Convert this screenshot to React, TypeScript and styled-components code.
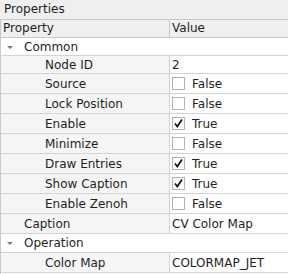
import React from 'react';
import styled, { createGlobalStyle } from 'styled-components';

const GlobalStyle = createGlobalStyle`
  body {
    margin: 0;
    font-family: 'DejaVu Sans', 'Noto Sans', sans-serif;
    font-size: 12px;
    color: #1e1e1e;
  }
`;

const Panel = styled.div`
  width: 288px;
  height: 274px;
  background: #efefef;
  overflow: hidden;
  display: flex;
  flex-direction: column;
`;

const TitleBar = styled.div`
  height: 19px;
  line-height: 18px;
  padding-left: 4px;
  flex: none;
`;

const Tree = styled.div`
  flex: 1;
  display: flex;
  flex-direction: column;
  border-left: 1px solid #c9c9c9;
  background: #ffffff;
`;

const HeaderRow = styled.div`
  display: flex;
  height: 19px;
  box-sizing: border-box;
  border-top: 1px solid #c9c9c9;
  border-bottom: 1px solid #c9c9c9;
  background: #efefef;
  line-height: 17px;
`;

const HeaderCell = styled.div<{ $first?: boolean }>`
  width: ${({ $first }) => ($first ? '169px' : 'auto')};
  flex: ${({ $first }) => ($first ? 'none' : '1')};
  padding-left: 2px;
  box-sizing: border-box;
  border-right: ${({ $first }) => ($first ? '1px solid #c9c9c9' : 'none')};
`;

const Row = styled.div<{ $h: number; $group?: boolean }>`
  display: flex;
  height: ${({ $h }) => $h}px;
  box-sizing: border-box;
  border-bottom: 1px solid #d4d4d4;
  background: ${({ $group }) => ($group ? '#ffffff' : '#f5f5f5')};
  align-items: stretch;
`;

const NameCell = styled.div<{ $level: number; $group?: boolean }>`
  width: ${({ $group }) => ($group ? 'auto' : '169px')};
  flex: ${({ $group }) => ($group ? '1' : 'none')};
  box-sizing: border-box;
  border-right: ${({ $group }) => ($group ? 'none' : '1px solid #d4d4d4')};
  display: flex;
  align-items: center;
  padding-left: ${({ $level }) => ($level === 0 ? 5 : 44)}px;
  white-space: nowrap;
`;

const Expander = styled.span`
  width: 0;
  height: 0;
  border-left: 3px solid transparent;
  border-right: 3px solid transparent;
  border-top: 3px solid #7a7a7a;
  margin-left: 1px;
  margin-right: 11px;
  margin-top: 1px;
`;

const Spacer = styled.span`
  width: 18px;
  flex: none;
`;

const ValueCell = styled.div`
  flex: 1;
  background: #ffffff;
  display: flex;
  align-items: center;
  padding-left: 2px;
  gap: 7px;
  white-space: nowrap;
`;

const Box = styled.span`
  width: 13px;
  height: 13px;
  box-sizing: border-box;
  border: 1px solid #b3b3b3;
  background: #ffffff;
  display: flex;
  align-items: center;
  justify-content: center;
  flex: none;
`;

type Prop = {
  name: string;
  level: number;
  h: number;
  group?: boolean;
  value?: string;
  check?: boolean;
};

const rows: Prop[] = [
  { name: 'Common', level: 0, h: 18, group: true },
  { name: 'Node ID', level: 1, h: 18, value: '2' },
  { name: 'Source', level: 1, h: 20, check: false },
  { name: 'Lock Position', level: 1, h: 20, check: false },
  { name: 'Enable', level: 1, h: 20, check: true },
  { name: 'Minimize', level: 1, h: 20, check: false },
  { name: 'Draw Entries', level: 1, h: 20, check: true },
  { name: 'Show Caption', level: 1, h: 20, check: true },
  { name: 'Enable Zenoh', level: 1, h: 20, check: false },
  { name: 'Caption', level: 0, h: 20, value: 'CV Color Map' },
  { name: 'Operation', level: 0, h: 19, group: true },
  { name: 'Color Map', level: 1, h: 20, value: 'COLORMAP_JET' },
];

function CheckValue({ on }: { on: boolean }) {
  return (
    <>
      <Box>
        {on && (
          <svg width="11" height="11" viewBox="0 0 11 11">
            <path d="M2 5.5 L4.3 8.5 L9 1.5" fill="none" stroke="#111" strokeWidth="1.7" />
          </svg>
        )}
      </Box>
      <span>{on ? 'True' : 'False'}</span>
    </>
  );
}

export default function App() {
  return (
    <Panel>
      <GlobalStyle />
      <TitleBar>Properties</TitleBar>
      <Tree>
        <HeaderRow>
          <HeaderCell $first>Property</HeaderCell>
          <HeaderCell>Value</HeaderCell>
        </HeaderRow>
        {rows.map((r) => (
          <Row key={r.name} $h={r.h} $group={r.group}>
            <NameCell $level={r.level} $group={r.group}>
              {r.level === 0 && (r.group ? <Expander /> : <Spacer />)}
              {r.name}
            </NameCell>
            {!r.group && (
              <ValueCell>
                {r.check !== undefined ? <CheckValue on={r.check} /> : r.value}
              </ValueCell>
            )}
          </Row>
        ))}
      </Tree>
    </Panel>
  );
}
